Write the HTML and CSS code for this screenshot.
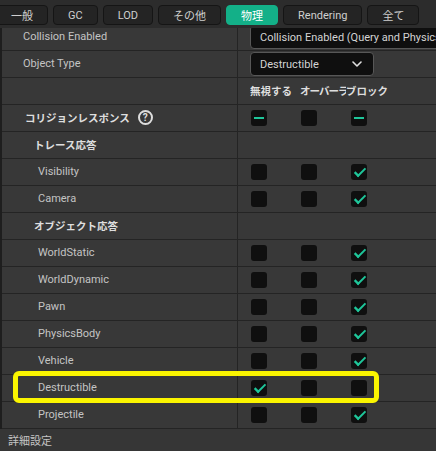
FILE: index.html
```html
<!DOCTYPE html>
<html lang="ja">
<head>
<meta charset="utf-8">
<link rel="stylesheet" href="styles.css">
</head>
<body>
<div class="panel">
  <div class="tabs">
    <div class="tab first">一般</div>
    <div class="tab">GC</div>
    <div class="tab">LOD</div>
    <div class="tab">その他</div>
    <div class="tab active">物理</div>
    <div class="tab">Rendering</div>
    <div class="tab">全て</div>
  </div>
  <div class="content">
    <div class="list">
      <div class="row">
        <div class="name l1">Collision Enabled</div>
        <div class="value"><div class="combo wide"><span>Collision Enabled (Query and Physics)</span></div></div>
      </div>
      <div class="row">
        <div class="name l1">Object Type</div>
        <div class="value"><div class="combo"><span>Destructible</span>
          <svg class="chev" width="10" height="6" viewBox="0 0 10 6"><polyline points="1,1 5,5 9,1" fill="none" stroke="#e0e0e0" stroke-width="1.6" stroke-linecap="round" stroke-linejoin="round"/></svg>
        </div></div>
      </div>
      <div class="row">
        <div class="name"></div>
        <div class="value heads"><span class="h h1">無視する</span><span class="h h2">オーバーラップ</span><span class="h h3">ブロック</span></div>
      </div>
      <div class="row">
        <div class="name cat">コリジョンレスポンス <span class="help">?</span></div>
        <div class="value checks"><span class="cb dash"></span><span class="cb"></span><span class="cb dash"></span></div>
      </div>
      <div class="row">
        <div class="name sub">トレース応答</div>
        <div class="value"></div>
      </div>
      <div class="row">
        <div class="name item">Visibility</div>
        <div class="value checks"><span class="cb"></span><span class="cb"></span><span class="cb on"></span></div>
      </div>
      <div class="row">
        <div class="name item">Camera</div>
        <div class="value checks"><span class="cb"></span><span class="cb"></span><span class="cb on"></span></div>
      </div>
      <div class="row">
        <div class="name sub">オブジェクト応答</div>
        <div class="value"></div>
      </div>
      <div class="row">
        <div class="name item">WorldStatic</div>
        <div class="value checks"><span class="cb"></span><span class="cb"></span><span class="cb on"></span></div>
      </div>
      <div class="row">
        <div class="name item">WorldDynamic</div>
        <div class="value checks"><span class="cb"></span><span class="cb"></span><span class="cb on"></span></div>
      </div>
      <div class="row">
        <div class="name item">Pawn</div>
        <div class="value checks"><span class="cb"></span><span class="cb"></span><span class="cb on"></span></div>
      </div>
      <div class="row">
        <div class="name item">PhysicsBody</div>
        <div class="value checks"><span class="cb"></span><span class="cb"></span><span class="cb on"></span></div>
      </div>
      <div class="row">
        <div class="name item">Vehicle</div>
        <div class="value checks"><span class="cb"></span><span class="cb"></span><span class="cb on"></span></div>
      </div>
      <div class="row">
        <div class="name item">Destructible</div>
        <div class="value checks"><span class="cb on"></span><span class="cb"></span><span class="cb"></span></div>
      </div>
      <div class="row">
        <div class="name item">Projectile</div>
        <div class="value checks"><span class="cb"></span><span class="cb"></span><span class="cb on"></span></div>
      </div>
    </div>
  </div>
  <div class="footer">詳細設定</div>
  <div class="highlight"></div>
</div>
</body>
</html>
```
FILE: styles.css
```css
* { box-sizing: border-box; }
html, body { margin: 0; padding: 0; }
body {
  width: 436px;
  height: 451px;
  overflow: hidden;
  background: #383838;
  font-family: Roboto, "Noto Sans CJK JP", sans-serif;
  font-size: 11px;
  color: #c4c4c4;
}
.panel {
  position: relative;
  width: 436px;
  height: 451px;
  display: flex;
  flex-direction: column;
}
.tabs {
  height: 28px;
  flex: none;
  background: #2c2c2c;
  display: flex;
  gap: 5px;
  padding-top: 5px;
  overflow: hidden;
  white-space: nowrap;
}
.tab {
  height: 20px;
  padding: 0 14px;
  border: 1px solid #151515;
  border-radius: 4px;
  background: #242424;
  color: #cfcfcf;
  display: flex;
  align-items: center;
  font-size: 11px;
}
.tab.first { margin-left: -4px; }
.tab.active {
  background: #13b088;
  border-color: #13b088;
  color: #ffffff;
}
.content {
  height: 401px;
  flex: none;
  overflow: hidden;
}
.list {
  margin-top: -4px;
  border-left: 2px solid #1e1e1e;
}
.row {
  display: grid;
  grid-template-columns: 236px 1fr;
  height: 27px;
  border-bottom: 1px solid #242424;
}
.name {
  border-right: 1px solid #242424;
  display: flex;
  align-items: center;
  padding-bottom: 1px;
  white-space: nowrap;
  overflow: hidden;
}
.l1 { padding-left: 21px; }
.cat { padding-left: 23px; font-weight: bold; color: #dedede; font-size: 10.5px; }
.sub { padding-left: 32px; font-weight: bold; color: #dedede; font-size: 10.5px; }
.item { padding-left: 36px; }
.value {
  display: flex;
  align-items: center;
  padding-left: 12px;
  overflow: hidden;
  white-space: nowrap;
}
.combo {
  flex: none;
  width: 124px;
  height: 24px;
  background: #0f0f0f;
  border: 1px solid #575757;
  border-radius: 4px;
  display: flex;
  align-items: center;
  justify-content: space-between;
  padding: 0 11px 0 9px;
  color: #d4d4d4;
}
.combo.wide { width: 220px; }
.chev { display: block; }
.heads { font-weight: bold; color: #dedede; font-size: 10.5px; padding-bottom: 1px; }
.h { display: block; overflow: hidden; }
.h1 { width: 50px; }
.h2 { width: 46px; font-size: 10.5px; letter-spacing: -1px; }
.help {
  display: inline-flex;
  align-items: center;
  justify-content: center;
  width: 15px;
  height: 15px;
  margin-left: 8px;
  border: 2px solid #dedede;
  border-radius: 50%;
  font-family: Roboto, sans-serif;
  font-size: 10px;
  font-weight: bold;
  color: #dedede;
}
.checks { padding-left: 13px; gap: 34px; }
.cb {
  flex: none;
  width: 16px;
  height: 16px;
  background: #0f0f0f;
  border-radius: 3px;
  position: relative;
}
.cb.dash::after {
  content: "";
  position: absolute;
  left: 3px;
  top: 7px;
  width: 10px;
  height: 2px;
  background: #1ec69a;
}
.cb.on::after {
  content: "";
  position: absolute;
  left: 4px;
  top: 3px;
  width: 8px;
  height: 4px;
  border-left: 2.4px solid #1ec69a;
  border-bottom: 2.4px solid #1ec69a;
  transform: translate(0, 1px) rotate(-45deg) scaleX(1.15);
  transform-origin: center;
}
.footer {
  flex: 1;
  display: flex;
  align-items: center;
  padding-left: 8px;
  background: #363636;
  color: #c4c4c4;
}
.highlight {
  position: absolute;
  left: 13px;
  top: 371px;
  width: 366px;
  height: 32px;
  border: 5px solid #fbf500;
  border-radius: 6px;
  pointer-events: none;
}
```
